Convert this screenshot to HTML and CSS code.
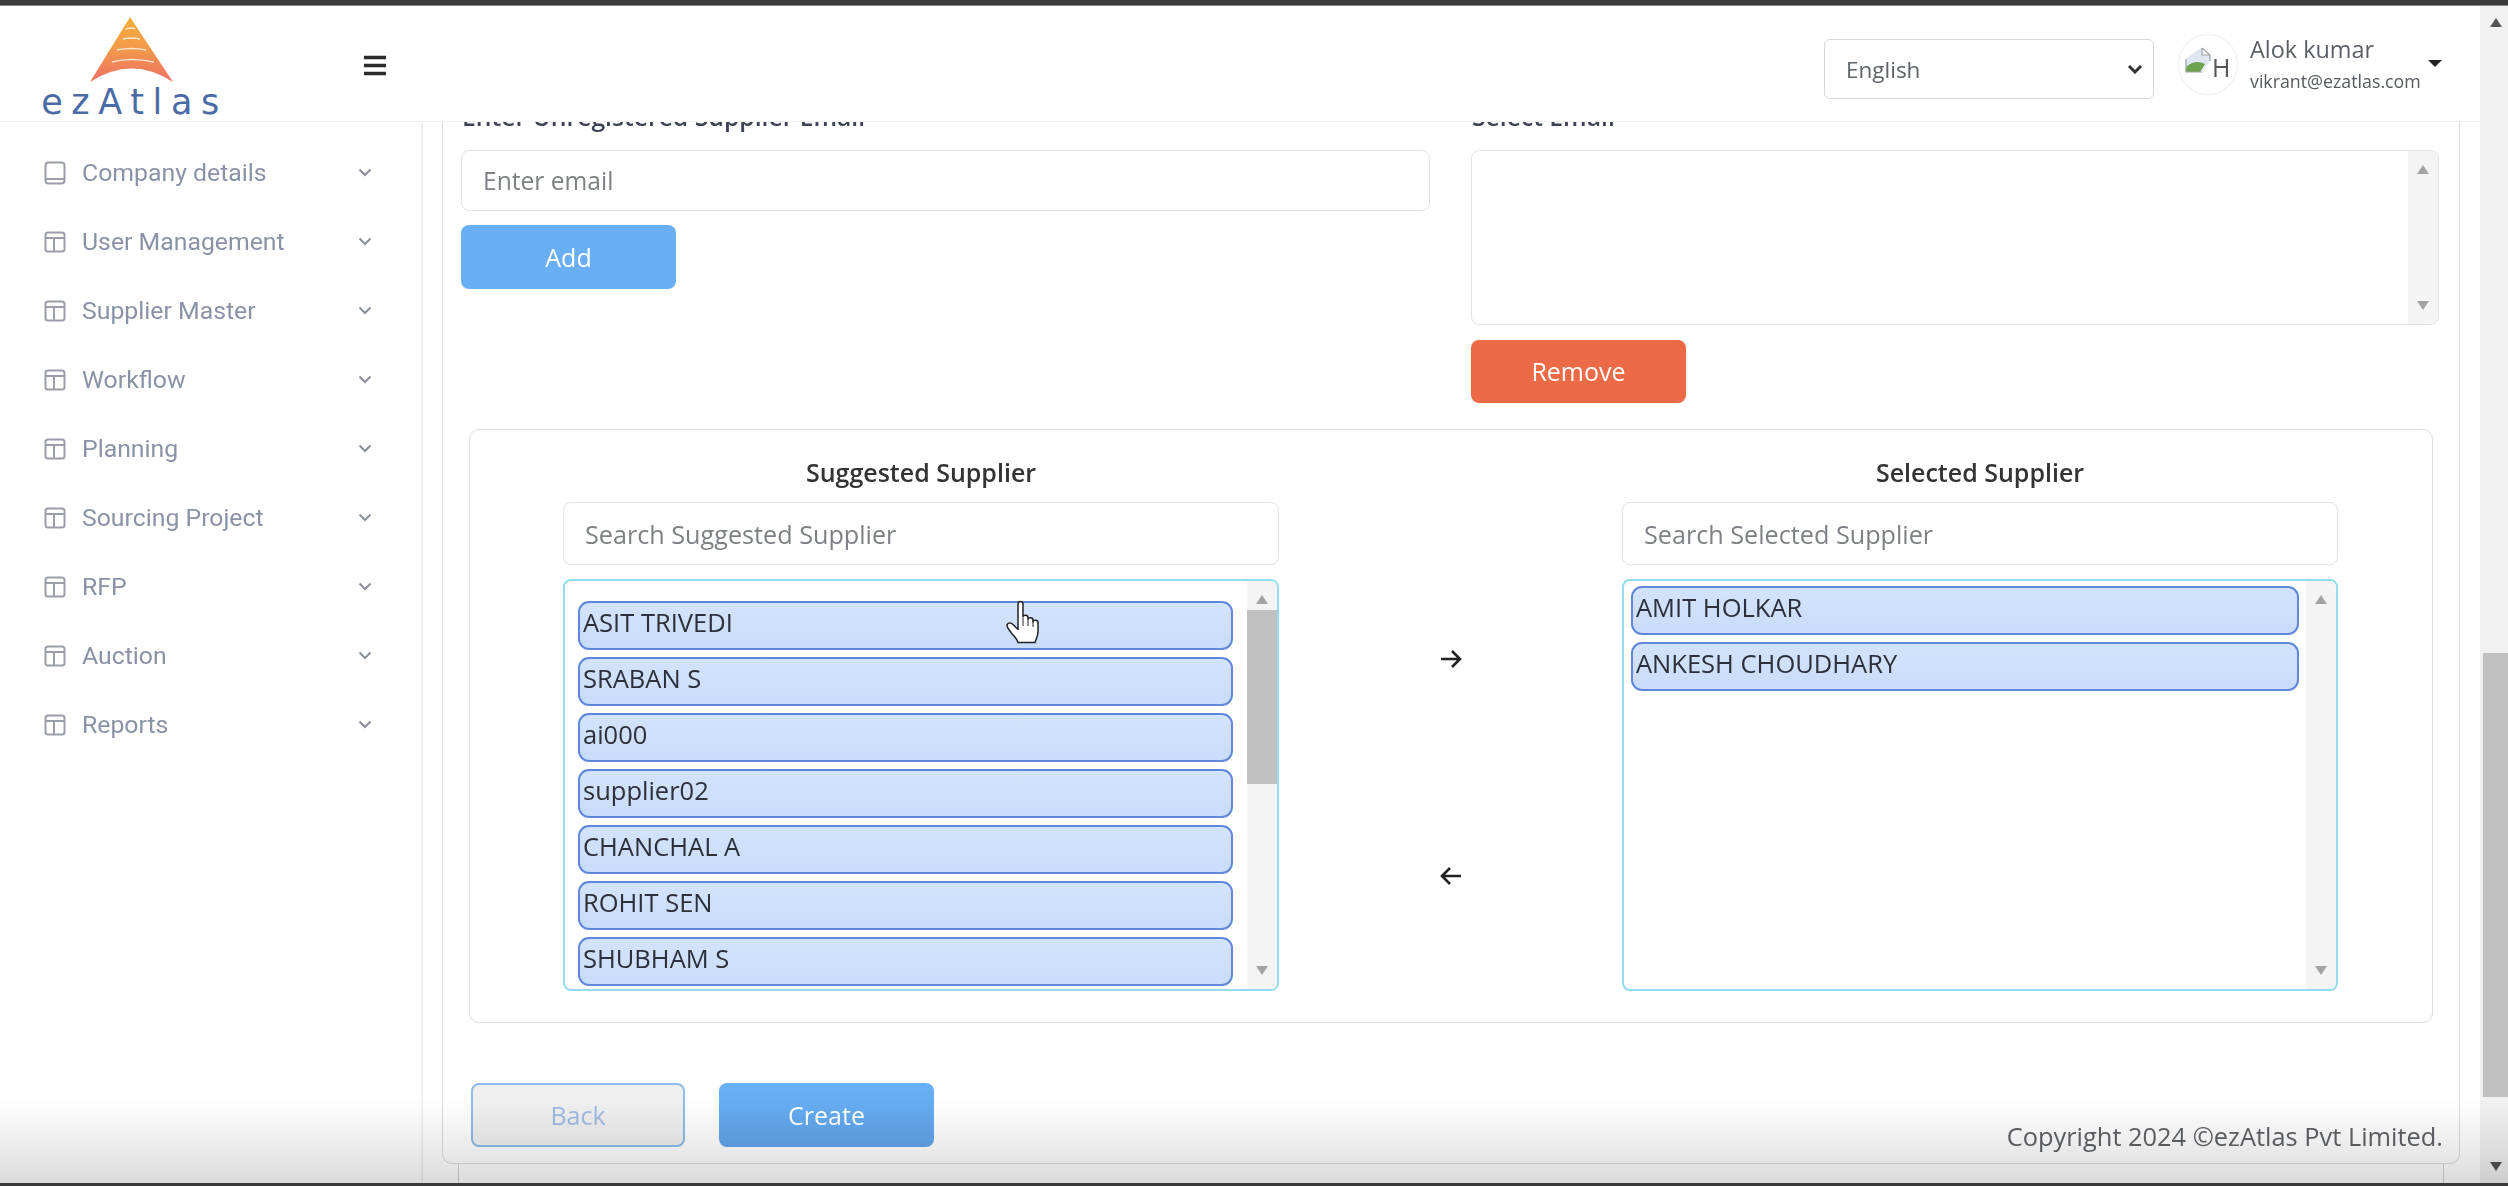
FILE: index.html
```html
<!DOCTYPE html>
<html lang="en">
<head>
<meta charset="utf-8">
<title>ezAtlas</title>
<link rel="stylesheet" href="styles.css">
</head>
<body>
<div class="screen">
  <div class="topbar"></div>
  <div class="app">
    <div class="page">
      <header class="header">
        <div class="brand">
          <div class="logo">
            <svg class="logo-mark" viewBox="0 0 83 66" width="83" height="66">
              <defs>
                <linearGradient id="lg" x1="0" y1="0" x2="0" y2="1">
                  <stop offset="0" stop-color="#f3ad3a"/>
                  <stop offset=".5" stop-color="#f2994a"/>
                  <stop offset="1" stop-color="#ee6f66"/>
                </linearGradient>
              </defs>
              <path d="M40 0 L83 65 Q42 38 0 65 Z" fill="url(#lg)"/>
              <path d="M36 12 Q41 10 45 12" stroke="#fff" stroke-width="1.6" fill="none" opacity=".75"/>
              <path d="M33 22 Q41 20 50 22" stroke="#fff" stroke-width="1.6" fill="none" opacity=".75"/>
              <path d="M27 33 Q41 30 56 33" stroke="#fff" stroke-width="1.6" fill="none" opacity=".75"/>
              <path d="M22 45 Q41 40 64 45" stroke="#fff" stroke-width="1.6" fill="none" opacity=".75"/>
            </svg>
            <span class="logo-text">ezAtlas</span>
          </div>
          <svg class="burger" viewBox="0 0 22 21" width="22" height="21"><path d="M0 2.5H22M0 10.5H22M0 18.500H22" stroke="#2c2c2c" stroke-width="3.4"/></svg>
        </div>
        <div class="header-tools">
          <div class="lang">
            <select class="lang-select"><option>English</option></select>
            <svg class="lang-caret" viewBox="0 0 16 10" width="16" height="10"><path d="M2 2l6 6 6-6" stroke="#333" stroke-width="3" fill="none"/></svg>
          </div>
          <div class="avatar">
            <svg viewBox="0 0 27 26" width="27" height="26">
              <path d="M1 25 L1 12 L14 2 L18 1 L25 8 L25 14 L17 25 Z" fill="#dfe8f2"/>
              <path d="M1 25 V20 Q10 12 20 17 L15 25 Z" fill="#6da34d"/>
              <path d="M17 1 V8 H25" fill="#fff" stroke="#9aa0a6" stroke-width="1.2"/>
              <path d="M17 1 L25 8 V14 M1 12 V25 H17" fill="none" stroke="#9aa0a6" stroke-width="1.2"/>
            </svg>
            <span class="avatar-alt">H</span>
          </div>
          <div class="user">
            <div class="user-name">Alok kumar</div>
            <div class="user-mail">vikrant@ezatlas.com</div>
          </div>
          <span class="user-caret"></span>
        </div>
      </header>
      <div class="body">
        <nav class="sidebar">
          <a class="nav-item">
            <svg class="nav-icon" viewBox="0 0 22 24" width="22" height="24"><rect x="1.5" y="1.5" width="19" height="21" rx="3" fill="none" stroke="#9a9ea8" stroke-width="2"/><path d="M1.5 18H20.5" stroke="#9a9ea8" stroke-width="2"/></svg>
            <span class="nav-label">Company details</span>
            <svg class="chev" viewBox="0 0 14 9" width="14" height="9"><path d="M1.5 1.5L7 7l5.5-5.5" stroke="#8a8f99" stroke-width="2" fill="none"/></svg>
          </a>
          <a class="nav-item">
            <svg class="nav-icon" viewBox="0 0 22 22" width="22" height="22"><rect x="1.5" y="1.5" width="19" height="19" rx="2.5" fill="none" stroke="#9a9ea8" stroke-width="2"/><path d="M1.5 7H20.5M10 7V20.5" stroke="#9a9ea8" stroke-width="2"/></svg>
            <span class="nav-label">User Management</span>
            <svg class="chev" viewBox="0 0 14 9" width="14" height="9"><path d="M1.5 1.5L7 7l5.5-5.5" stroke="#8a8f99" stroke-width="2" fill="none"/></svg>
          </a>
          <a class="nav-item">
            <svg class="nav-icon" viewBox="0 0 22 22" width="22" height="22"><rect x="1.5" y="1.5" width="19" height="19" rx="2.5" fill="none" stroke="#9a9ea8" stroke-width="2"/><path d="M1.5 7H20.5M10 7V20.5" stroke="#9a9ea8" stroke-width="2"/></svg>
            <span class="nav-label">Supplier Master</span>
            <svg class="chev" viewBox="0 0 14 9" width="14" height="9"><path d="M1.5 1.5L7 7l5.5-5.5" stroke="#8a8f99" stroke-width="2" fill="none"/></svg>
          </a>
          <a class="nav-item">
            <svg class="nav-icon" viewBox="0 0 22 22" width="22" height="22"><rect x="1.5" y="1.5" width="19" height="19" rx="2.5" fill="none" stroke="#9a9ea8" stroke-width="2"/><path d="M1.5 7H20.5M10 7V20.5" stroke="#9a9ea8" stroke-width="2"/></svg>
            <span class="nav-label">Workflow</span>
            <svg class="chev" viewBox="0 0 14 9" width="14" height="9"><path d="M1.5 1.5L7 7l5.5-5.5" stroke="#8a8f99" stroke-width="2" fill="none"/></svg>
          </a>
          <a class="nav-item">
            <svg class="nav-icon" viewBox="0 0 22 22" width="22" height="22"><rect x="1.5" y="1.5" width="19" height="19" rx="2.5" fill="none" stroke="#9a9ea8" stroke-width="2"/><path d="M1.5 7H20.5M10 7V20.5" stroke="#9a9ea8" stroke-width="2"/></svg>
            <span class="nav-label">Planning</span>
            <svg class="chev" viewBox="0 0 14 9" width="14" height="9"><path d="M1.5 1.5L7 7l5.5-5.5" stroke="#8a8f99" stroke-width="2" fill="none"/></svg>
          </a>
          <a class="nav-item">
            <svg class="nav-icon" viewBox="0 0 22 22" width="22" height="22"><rect x="1.5" y="1.5" width="19" height="19" rx="2.5" fill="none" stroke="#9a9ea8" stroke-width="2"/><path d="M1.5 7H20.5M10 7V20.5" stroke="#9a9ea8" stroke-width="2"/></svg>
            <span class="nav-label">Sourcing Project</span>
            <svg class="chev" viewBox="0 0 14 9" width="14" height="9"><path d="M1.5 1.5L7 7l5.5-5.5" stroke="#8a8f99" stroke-width="2" fill="none"/></svg>
          </a>
          <a class="nav-item">
            <svg class="nav-icon" viewBox="0 0 22 22" width="22" height="22"><rect x="1.5" y="1.5" width="19" height="19" rx="2.5" fill="none" stroke="#9a9ea8" stroke-width="2"/><path d="M1.5 7H20.5M10 7V20.5" stroke="#9a9ea8" stroke-width="2"/></svg>
            <span class="nav-label">RFP</span>
            <svg class="chev" viewBox="0 0 14 9" width="14" height="9"><path d="M1.5 1.5L7 7l5.5-5.5" stroke="#8a8f99" stroke-width="2" fill="none"/></svg>
          </a>
          <a class="nav-item">
            <svg class="nav-icon" viewBox="0 0 22 22" width="22" height="22"><rect x="1.5" y="1.5" width="19" height="19" rx="2.5" fill="none" stroke="#9a9ea8" stroke-width="2"/><path d="M1.5 7H20.5M10 7V20.5" stroke="#9a9ea8" stroke-width="2"/></svg>
            <span class="nav-label">Auction</span>
            <svg class="chev" viewBox="0 0 14 9" width="14" height="9"><path d="M1.5 1.5L7 7l5.5-5.5" stroke="#8a8f99" stroke-width="2" fill="none"/></svg>
          </a>
          <a class="nav-item">
            <svg class="nav-icon" viewBox="0 0 22 22" width="22" height="22"><rect x="1.5" y="1.5" width="19" height="19" rx="2.5" fill="none" stroke="#9a9ea8" stroke-width="2"/><path d="M1.5 7H20.5M10 7V20.5" stroke="#9a9ea8" stroke-width="2"/></svg>
            <span class="nav-label">Reports</span>
            <svg class="chev" viewBox="0 0 14 9" width="14" height="9"><path d="M1.5 1.5L7 7l5.5-5.5" stroke="#8a8f99" stroke-width="2" fill="none"/></svg>
          </a>
        </nav>
        <main class="main">
          <div class="card">
            <div class="form-row">
              <div class="field">
                <label class="field-label">Enter Unregistered Supplier Email</label>
                <input class="text-input" placeholder="Enter email">
                <button class="btn btn-blue">Add</button>
              </div>
              <div class="field">
                <label class="field-label">Select Email</label>
                <div class="mail-box">
                  <div class="mail-area"></div>
                  <div class="sbar sbar-soft"><i class="tri-up"></i><i class="tri-down"></i></div>
                </div>
                <button class="btn btn-orange">Remove</button>
              </div>
            </div>
            <section class="suppliers">
              <div class="sup-col">
                <h3 class="sup-title">Suggested Supplier</h3>
                <input class="text-input search" placeholder="Search Suggested Supplier">
                <div class="listbox listbox-a">
                  <div class="items">
                    <div class="item">ASIT TRIVEDI</div>
                    <div class="item">SRABAN S</div>
                    <div class="item">ai000</div>
                    <div class="item">supplier02</div>
                    <div class="item">CHANCHAL A</div>
                    <div class="item">ROHIT SEN</div>
                    <div class="item">SHUBHAM S</div>
                  </div>
                  <div class="sbar"><i class="tri-up"></i><span class="thumb"></span><i class="tri-down"></i></div>
                </div>
              </div>
              <div class="arrows">
                <svg viewBox="0 0 24 24" width="24" height="24"><path d="M2 12H21M13 4l8 8-8 8" stroke="#222" stroke-width="2.6" fill="none"/></svg>
                <svg viewBox="0 0 24 24" width="24" height="24"><path d="M22 12H3M11 4l-8 8 8 8" stroke="#222" stroke-width="2.6" fill="none"/></svg>
              </div>
              <div class="sup-col">
                <h3 class="sup-title">Selected Supplier</h3>
                <input class="text-input search" placeholder="Search Selected Supplier">
                <div class="listbox listbox-b">
                  <div class="items">
                    <div class="item">AMIT HOLKAR</div>
                    <div class="item">ANKESH CHOUDHARY</div>
                  </div>
                  <div class="sbar sbar-soft"><i class="tri-up"></i><i class="tri-down"></i></div>
                </div>
              </div>
            </section>
            <div class="actions">
              <button class="btn btn-back">Back</button>
              <button class="btn btn-create">Create</button>
              <div class="copyright">Copyright 2024 ©ezAtlas Pvt Limited.</div>
            </div>
          </div>
          <div class="under"></div>
        </main>
      </div>
    </div>
    <div class="page-scroll"><i class="tri-up dark"></i><span class="page-thumb"></span><i class="tri-down dark"></i></div>
  </div>
  <div class="bottombar"></div>
  <svg class="hand" viewBox="0 0 36 46" width="36" height="46">
    <path d="M13 4c0-3.500 5-3.500 5 0v13c0-2.500 5-2.500 5 .5v2c0-2.500 5-2.500 5 .5v2c0-2.500 5-2.500 5 .5v9c0 5-2 7-3 11H13c-1-4-4-6-7-10-2-3-4-5-4-7 0-3 4-3 6-1l5 5Z" fill="#fff" stroke="#222" stroke-width="1.5" stroke-linejoin="round"/>
    <path d="M18 18v8M23 20v6M28 22v5" stroke="#222" stroke-width="1" fill="none"/>
  </svg>
  <div class="shade"></div>
</div>
</body>
</html>
```

FILE: styles.css
```css
* { box-sizing: border-box; }
html, body { margin: 0; height: 100%; overflow: hidden; background: #fff; }
body { font-family: "Open Sans", "Noto Sans", sans-serif; color: #333; font-size: 25px; }

.screen { position: relative; width: 2508px; height: 1186px; display: flex; flex-direction: column; filter: blur(.7px); overflow: hidden; }
.topbar { height: 6px; flex: none; background: #3b3b3b; border-bottom: 1px solid #888; }
.bottombar { height: 3px; flex: none; background: #3a3a3a; }
.app { flex: 1; min-height: 0; display: flex; }
.page { flex: 1; min-width: 0; display: flex; flex-direction: column; }

/* header */
.header { height: 116px; flex: none; display: flex; align-items: stretch; border-bottom: 1px solid #f1f1f1; background: #fff; }
.brand { width: 423px; flex: none; display: flex; align-items: center; justify-content: space-between; padding: 0 37px 0 40px; }
.logo { width: 180px; display: flex; flex-direction: column; align-items: center; margin-top: 8px; }
.logo-mark { display: block; margin-left: 3px; margin-top: 0; }
.logo-text { font-family: "DejaVu Sans", sans-serif; font-size: 35px; line-height: 32px; letter-spacing: 8.6px; color: #4a6ba6; white-space: nowrap; margin-right: -9px; margin-top: 3px; }
.burger { margin-top: 4px; }
.header-tools { flex: 1; display: flex; align-items: center; justify-content: flex-end; padding-right: 38px; }
.lang { position: relative; width: 330px; height: 60px; margin-top: 11px; margin-right: 24px; }
.lang-select { appearance: none; width: 100%; height: 100%; border: 1px solid #d6d8db; border-radius: 6px; background: #fff; padding: 0 0 0 21px; font: 22.5px "Open Sans", sans-serif; color: #5e6469; }
.lang-caret { position: absolute; right: 11px; top: 25px; }
.avatar { width: 60px; height: 61px; border: 1px solid #eeeeee; border-radius: 50%; display: flex; align-items: center; padding-left: 6px; margin-top: 2px; }
.avatar svg { margin-top: -10px; }
.avatar-alt { font-size: 25px; color: #555; line-height: 1; margin-top: 6px; }
.user { margin-left: 12px; width: 178px; margin-top: 0; }
.user-name { font-size: 23.4px; line-height: 30px; color: #5b5f66; }
.user-mail { font-size: 17.8px; line-height: 26px; margin-top: 4px; color: #555a60; }
.user-caret { width: 0; height: 0; border: 7px solid transparent; border-top: 7px solid #222; border-bottom: 0; margin-top: 0; }

/* sidebar */
.body { flex: 1; min-height: 0; display: flex; }
.sidebar { width: 423px; flex: none; border-right: 2px solid #f0f0f0; padding: 16px 49px 0 44px; }
.nav-item { height: 69px; display: flex; align-items: center; font-family: Roboto, sans-serif; font-size: 24.8px; color: #8a93a6; }
.nav-icon { flex: none; width: 22px; }
.nav-label { flex: 1; margin-left: 16px; white-space: nowrap; }
.chev { flex: none; }

/* main */
.main { flex: 1; min-width: 0; display: flex; flex-direction: column; overflow: hidden; padding: 0 20px 0 19px; }
.card { flex: none; border: 1px solid #dcdcdc; border-top: 0; border-radius: 0 0 10px 10px; padding: 0 20px 16px 18px; background: #fff; }
.under { flex: 1; margin: 0 16px; border-left: 1px solid #d4d4d4; border-right: 1px solid #d4d4d4; }
.form-row { display: grid; grid-template-columns: 969px 968px; column-gap: 41px; margin-top: -20px; }
.field { display: flex; flex-direction: column; align-items: flex-start; }
.field-label { font-weight: 600; font-size: 24.7px; line-height: 30px; color: #3d4354; margin-bottom: 18px; margin-left: 1px; }
.text-input { width: 100%; height: 61px; border: 1px solid #e3e3e3; border-radius: 8px; padding: 0 21px; font: 24.6px "Open Sans", sans-serif; color: #333; background: #fff; }
.text-input::placeholder { color: #7d8085; opacity: 1; }
.btn { border: 0; border-radius: 8px; font: 25px "Open Sans", sans-serif; color: #fff; height: 64px; width: 215px; }
.btn-blue { background: #69aff5; margin-top: 14px; }
.btn-orange { background: #ec6a46; margin-top: 15px; height: 63px; padding-bottom: 2px; }
.mail-box { width: 100%; height: 175px; border: 1px solid #e3e3e3; border-radius: 8px; display: flex; overflow: hidden; }
.mail-area { flex: 1; }

.sbar { flex: none; width: 30px; background: #f4f4f4; display: flex; flex-direction: column; align-items: center; padding: 14px 0; position: relative; }
.sbar .tri-down { margin-top: auto; }
.tri-up, .tri-down { display: block; width: 0; height: 0; border-left: 6px solid transparent; border-right: 6px solid transparent; }
.tri-up { border-bottom: 9px solid #a3a3a3; }
.tri-down { border-top: 9px solid #a3a3a3; }
.tri-up.dark { border-bottom-color: #555; }
.tri-down.dark { border-top-color: #555; }
.thumb { width: 100%; height: 174px; background: #c1c1c1; margin-top: 6px; }

/* supplier picker */
.suppliers { margin: 26px 6px 0 8px; height: 594px; border: 1px solid #dcdcdc; border-radius: 10px; padding: 14px 94px 30px 93px; display: grid; grid-template-columns: 716px 343px 716px; }
.sup-col { display: flex; flex-direction: column; }
.sup-title { margin: 13px 0 15px; font-size: 25px; line-height: 30px; font-weight: 600; text-align: center; color: #333; }
.search { height: 63px; flex: none; font-size: 25.2px; }
.listbox { margin-top: 14px; height: 412px; border: 2px solid #92dcec; border-radius: 8px; display: flex; overflow: hidden; }
.items { flex: 1; min-width: 0; display: flex; flex-direction: column; gap: 7px; }
.listbox-a .items { padding: 20px 14px 0 13px; }
.listbox-b .items { padding: 5px 7px 0 7px; }
.listbox .sbar { margin-top: 0; }
.item { height: 49px; flex: none; background: linear-gradient(#d3e3fc, #c9dcf9); border: 2px solid #5f88da; border-radius: 11px; padding: 0 0 8px 3px; display: flex; align-items: center; font-size: 25.5px; color: #2b303b; white-space: nowrap; }
.arrows { display: flex; flex-direction: column; align-items: center; gap: 193px; padding-top: 203px; }

/* actions */
.actions { display: flex; align-items: flex-start; margin: 60px 0 0 10px; gap: 34px; }
.btn-back { width: 214px; background: #efefef; border: 2px solid #8dbcee; color: #9fbce6; }
.btn-create { background: linear-gradient(#68b0f7, #5fa5ea); }
.copyright { margin-left: auto; margin-right: -4px; margin-top: 38px; margin-bottom: -4px; font-size: 25.4px; line-height: 30px; color: #5f6266; white-space: nowrap; }

.page-scroll { width: 28px; flex: none; background: #f1f1f1; padding: 12px 0 12px 3px; display: flex; flex-direction: column; align-items: center; position: relative; }
.page-thumb { width: 25px; height: 444px; background: #c1c1c1; margin-top: 626px; }
.page-scroll .tri-down { margin-top: auto; }

/* overlays */
.hand { position: absolute; left: 1005px; top: 600px; }
.shade { position: absolute; left: 0; right: 0; bottom: 3px; height: 83px; pointer-events: none; background: linear-gradient(rgba(0,0,0,0), rgba(0,0,0,.14)); }
```
